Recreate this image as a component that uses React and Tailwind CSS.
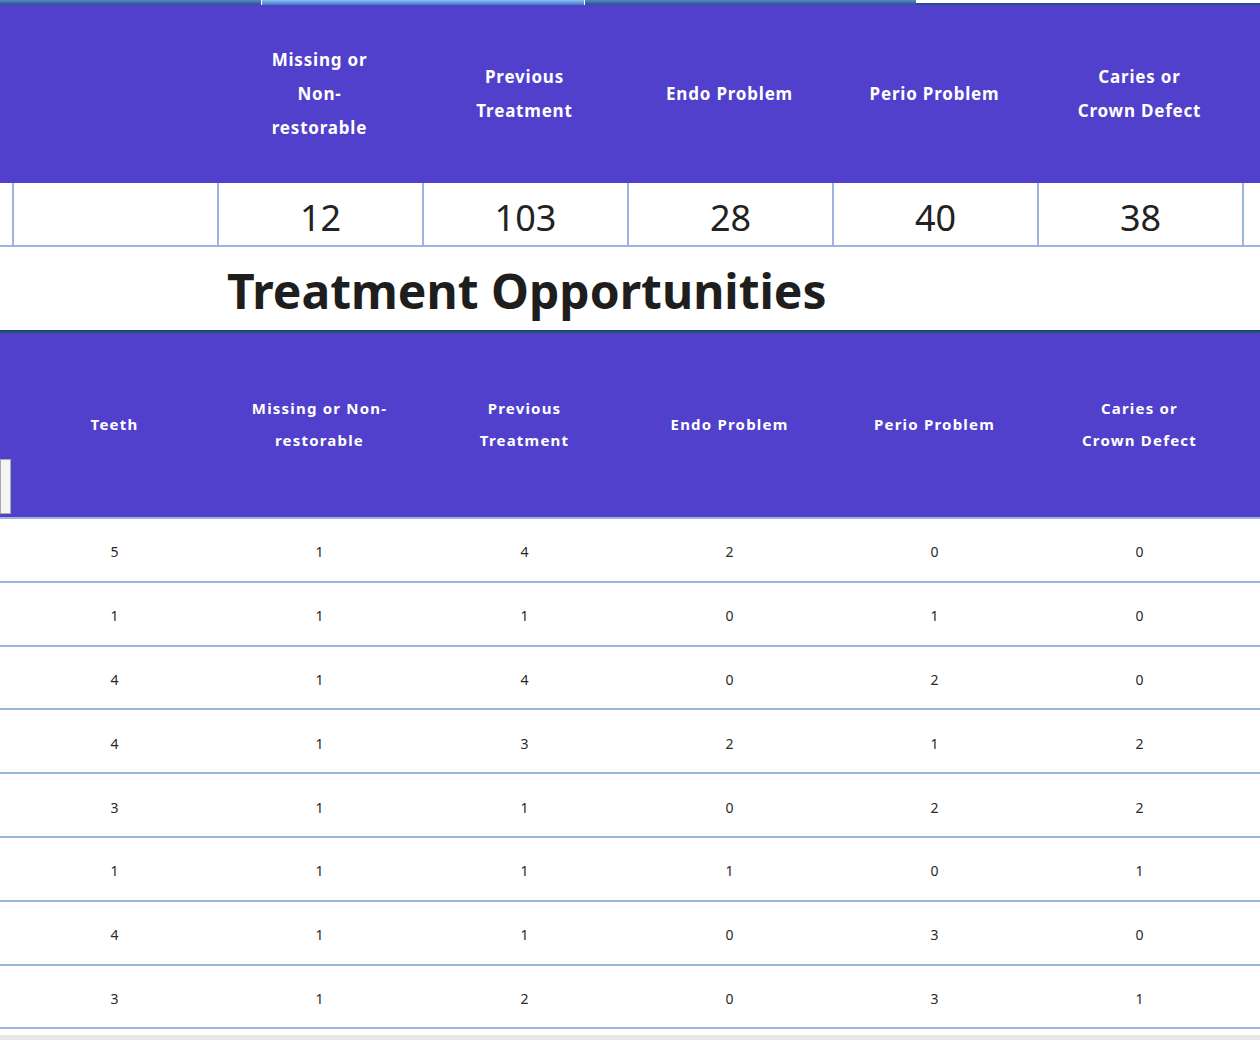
const head1 = ['', 'Missing or\nNon-\nrestorable', 'Previous\nTreatment', 'Endo Problem', 'Perio Problem', 'Caries or\nCrown Defect'];
const totals = ['', '12', '103', '28', '40', '38'];
const head2 = ['Teeth', 'Missing or Non-\nrestorable', 'Previous\nTreatment', 'Endo Problem', 'Perio Problem', 'Caries or\nCrown Defect'];
const rows = [
  [5, 1, 4, 2, 0, 0],
  [1, 1, 1, 0, 1, 0],
  [4, 1, 4, 0, 2, 0],
  [4, 1, 3, 2, 1, 2],
  [3, 1, 1, 0, 2, 2],
  [1, 1, 1, 1, 0, 1],
  [4, 1, 1, 0, 3, 0],
  [3, 1, 2, 0, 3, 1],
];

const cols = 'grid grid-cols-[12px_repeat(6,205px)_1fr]';

export default function App() {
  return (
    <div className="w-[1260px] h-[1040px] overflow-hidden bg-white font-['Verdana','DejaVu_Sans',sans-serif]">
      <div className="flex h-[5px]">
        <div className="w-[261px] bg-gradient-to-b from-[#5a8ac8] to-[#23508f]" />
        <div className="w-px bg-white" />
        <div className="w-[322px] bg-gradient-to-b from-[#8fc3f2] to-[#3d76c4]" />
        <div className="w-px bg-white" />
        <div className="w-[331px] bg-gradient-to-b from-[#5a8ac8] to-[#23508f]" />
        <div className="flex-1 bg-white border-b-2 border-[#23508f]" />
      </div>

      <div className={`${cols} h-[178px] bg-[#5140cb] text-white font-bold text-[17px] leading-[34px] tracking-[0.8px]`}>
        <div />
        {head1.map((h, i) => (
          <div key={i} className="flex items-center justify-center text-center whitespace-pre-line">{h}</div>
        ))}
        <div />
      </div>

      <div className={`${cols} h-[64px] border-b-2 border-[#9db4de] font-['Open_Sans',sans-serif] text-[36px] text-[#222]`}>
        <div />
        {totals.map((t, i) => (
          <div key={i} className="flex items-center justify-center pt-2 border-l-2 border-[#9db4de]">{t}</div>
        ))}
        <div className="border-l-2 border-[#9db4de]" />
      </div>

      <div className="h-[83px] flex items-center pl-[227px] pt-1 font-['Lato',sans-serif] font-bold text-[48px] text-[#1e1e1e]">
        Treatment Opportunities
      </div>

      <div className="h-[4px] bg-gradient-to-b from-[#1b3d73] to-[#3a5d99]" />

      <div className={`${cols} relative h-[185px] bg-[#5140cb] text-white font-bold text-[15px] leading-[32px] tracking-[1.2px] border-b-2 border-[#9db4de]`}>
        <div className="absolute left-0 top-[125px] w-[11px] h-[55px] bg-[#f5f5f5] border border-[#aaa]" />
        <div />
        {head2.map((h, i) => (
          <div key={i} className="flex items-center justify-center text-center whitespace-pre-line pb-[4px]">{h}</div>
        ))}
        <div />
      </div>

      {rows.map((r, ri) => (
        <div key={ri} className={`${cols} h-[63.8px] border-b-2 border-[#9db4de] text-[14px] text-[#2a2a2a]`}>
          <div />
          {r.map((v, i) => (
            <div key={i} className="flex items-center justify-center pt-1">{v}</div>
          ))}
          <div />
        </div>
      ))}
      <div className="mt-[6px] h-[6px] bg-[#e8e8e8]" />
    </div>
  );
}
